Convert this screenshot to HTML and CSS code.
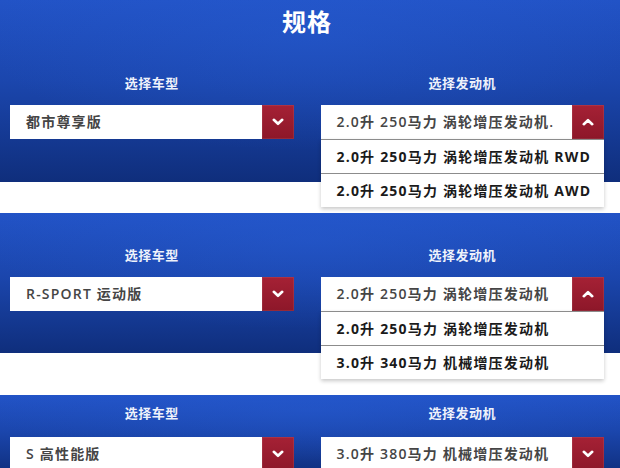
FILE: index.html
```html
<!DOCTYPE html>
<html lang="zh-CN">
<head>
<meta charset="utf-8">
<title>规格</title>
<link rel="stylesheet" href="styles.css">
</head>
<body>
<section class="panel panel-first">
  <h1 class="title">规格</h1>
  <div class="cols">
    <div class="col">
      <div class="label">选择车型</div>
      <div class="select">
        <span class="value">都市尊享版</span>
        <span class="btn"><svg viewBox="0 0 12 8" class="chev"><path d="M1.8 1.8 L6 5.8 L10.2 1.8"/></svg></span>
      </div>
    </div>
    <div class="col">
      <div class="label">选择发动机</div>
      <div class="select open">
        <span class="value">2.0升 250马力 涡轮增压发动机.</span>
        <span class="btn"><svg viewBox="0 0 12 8" class="chev"><path d="M1.8 6.2 L6 2.2 L10.2 6.2"/></svg></span>
        <ul class="menu">
          <li>2.0升 250马力 涡轮增压发动机 RWD</li>
          <li>2.0升 250马力 涡轮增压发动机 AWD</li>
        </ul>
      </div>
    </div>
  </div>
</section>
<div class="gap gap-1"></div>
<section class="panel panel-second">
  <div class="cols">
    <div class="col">
      <div class="label">选择车型</div>
      <div class="select">
        <span class="value">R-SPORT 运动版</span>
        <span class="btn"><svg viewBox="0 0 12 8" class="chev"><path d="M1.8 1.8 L6 5.8 L10.2 1.8"/></svg></span>
      </div>
    </div>
    <div class="col">
      <div class="label">选择发动机</div>
      <div class="select open">
        <span class="value">2.0升 250马力 涡轮增压发动机</span>
        <span class="btn"><svg viewBox="0 0 12 8" class="chev"><path d="M1.8 6.2 L6 2.2 L10.2 6.2"/></svg></span>
        <ul class="menu">
          <li>2.0升 250马力 涡轮增压发动机</li>
          <li>3.0升 340马力 机械增压发动机</li>
        </ul>
      </div>
    </div>
  </div>
</section>
<div class="gap gap-2"></div>
<section class="panel panel-third">
  <div class="cols">
    <div class="col">
      <div class="label">选择车型</div>
      <div class="select">
        <span class="value">S 高性能版</span>
        <span class="btn"><svg viewBox="0 0 12 8" class="chev"><path d="M1.8 1.8 L6 5.8 L10.2 1.8"/></svg></span>
      </div>
    </div>
    <div class="col">
      <div class="label">选择发动机</div>
      <div class="select">
        <span class="value">3.0升 380马力 机械增压发动机</span>
        <span class="btn"><svg viewBox="0 0 12 8" class="chev"><path d="M1.8 1.8 L6 5.8 L10.2 1.8"/></svg></span>
      </div>
    </div>
  </div>
</section>
</body>
</html>
```
FILE: styles.css
```css
* { box-sizing: border-box; }
html, body { margin: 0; padding: 0; }
body {
  width: 620px;
  height: 468px;
  overflow: hidden;
  background: #ffffff;
  font-family: "Open Sans", "Noto Sans CJK SC", sans-serif;
}
.panel {
  position: relative;
  background:
    radial-gradient(ellipse 75% 90% at 50% 20%, rgba(40, 95, 215, 0.35), rgba(0, 0, 0, 0) 70%),
    linear-gradient(180deg, #2253c6 0%, #1b46ad 45%, #0f2e7c 100%);
}
.panel-first { height: 182px; padding: 7px 16px 0 10px; }
.panel-second { height: 140px; padding: 33px 16px 0 10px; }
.panel-third { height: 80px; padding: 9px 16px 0 10px; }
.gap-1 { height: 31px; }
.gap-2 { height: 42px; }
.title {
  margin: 0 0 37px;
  text-align: center;
  color: #ffffff;
  font-size: 24px;
  line-height: 30px;
  font-weight: 700;
  letter-spacing: 1px;
}
.cols {
  display: grid;
  grid-template-columns: 1fr 1fr;
  column-gap: 27px;
}
.label {
  text-align: center;
  color: #eef2fb;
  font-size: 13px;
  line-height: 18px;
  font-weight: 700;
  letter-spacing: 0.5px;
  margin-bottom: 13px;
}
.panel-third .label { margin-bottom: 15px; }
.select {
  position: relative;
  display: flex;
  height: 34px;
  background: #ffffff;
}
.value {
  flex: 1;
  padding-left: 16px;
  line-height: 34px;
  font-size: 14px;
  font-weight: 600;
  color: #454545;
  letter-spacing: 1.2px;
  white-space: nowrap;
  overflow: hidden;
}
.btn {
  width: 32px;
  display: flex;
  align-items: center;
  justify-content: center;
  background: linear-gradient(180deg, #a52135 0%, #8d1729 100%);
  box-shadow: inset 0 0 0 1px rgba(255, 255, 255, 0.08);
}
.chev {
  width: 12px;
  height: 8px;
  fill: none;
  stroke: #ffffff;
  stroke-width: 2.6;
  stroke-linecap: round;
  stroke-linejoin: round;
}
.menu {
  position: absolute;
  top: 34px;
  left: 0;
  right: 0;
  margin: 0;
  padding: 0;
  list-style: none;
  background: #ffffff;
  box-shadow: 0 2px 4px rgba(0, 0, 0, 0.22);
  z-index: 2;
}
.menu li {
  height: 34px;
  line-height: 33px;
  padding-left: 16px;
  border-top: 1px solid #8c8c8c;
  font-size: 14px;
  font-weight: 700;
  color: #1a1a1a;
  letter-spacing: 1.2px;
  white-space: nowrap;
}
```
